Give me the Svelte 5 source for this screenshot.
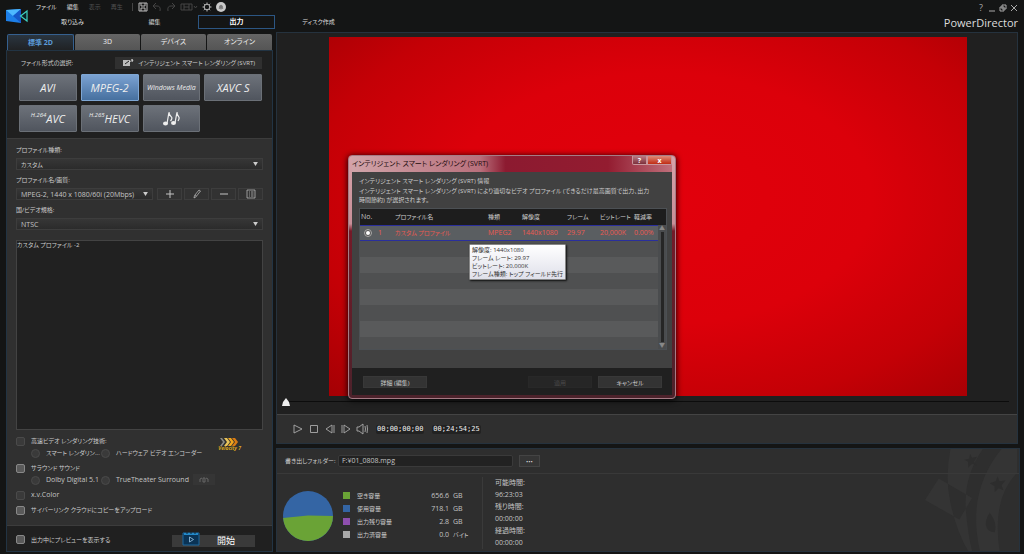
<script>
  const menus = [
    { label: 'ファイル' },
    { label: '編集' },
    { label: '表示', off: true },
    { label: '再生', off: true }
  ];
  const rooms = ['取り込み', '編集', '出力', 'ディスク作成'];
  const tabs = ['標準 2D', '3D', 'デバイス', 'オンライン'];
  const formats = [
    { text: 'AVI' },
    { text: 'MPEG-2' },
    { text: 'Windows Media', small: true },
    { text: 'XAVC S' },
    { sup: 'H.264', text: 'AVC' },
    { sup: 'H.265', text: 'HEVC' },
    { icon: true, text: '' }
  ];
  const space = [
    { label: '空き容量', value: '656.6', unit: 'GB', kind: 'free' },
    { label: '使用容量', value: '718.1', unit: 'GB', kind: 'used' },
    { label: '出力残り容量', value: '2.8', unit: 'GB', kind: 'left' },
    { label: '出力済容量', value: '0.0', unit: 'バイト', kind: 'done' }
  ];
  const times = [
    { label: '可能時間:', value: '96:23:03' },
    { label: '残り時間:', value: '00:00:00' },
    { label: '経過時間:', value: '00:00:00' }
  ];
  const emptyRows = [1, 2, 3, 4, 5, 6, 7];

  let room = $state('出力');
  let tab = $state('標準 2D');
  let format = $state('MPEG-2');
  let notes = $state('カスタム プロファイル -2');
  let folder = $state('F:¥01_0808.mpg');
</script>

{#snippet arrow()}
  <svg class="arrow" viewBox="0 0 6 5" aria-hidden="true"><path d="M0 0h6L3 5z" /></svg>
{/snippet}

<div class="app">
  <header>
    <svg class="logo" viewBox="0 0 24 16" aria-hidden="true">
      <path d="M0 2 15 1v14L0 13z" fill="#1d7fe8" />
      <path d="M0 2 15 1 7 8z" fill="#4db8ff" />
      <path d="M15 15 7 8l8-7z" fill="#1557c8" />
      <path d="M21 3 14.500 8l6.500 5z" fill="#0a2026" stroke="#3fd2c2" stroke-width="1.200" />
    </svg>
    <div class="bars">
      <div class="menu">
        {#each menus as item}
          <button disabled={item.off}>{item.label}</button>
        {/each}
        <span class="split"></span>
        <div class="tools">
          <svg viewBox="0 0 10 10"><path d="M1 1h8v8H1zM3 1v3h4V1M3 9V6h4v3" /></svg>
          <svg class="dim" viewBox="0 0 10 10"><path d="M4 1 1 4l3 3M1 4h4q4 0 3 5" /></svg>
          <svg class="dim" viewBox="0 0 10 10"><path d="M6 1l3 3-3 3M9 4H5Q1 4 2 9" /></svg>
          <svg class="wide dim" viewBox="0 0 18 10"><path d="M1 2h11v6H1zM4 2v6M9 2v6M4 5h5M14 4l1.500 2L17 4" /></svg>
          <svg viewBox="0 0 10 10">
            <circle cx="5" cy="5" r="2.800" />
            <path d="M5 .5v1.500M5 8v1.500M.5 5H2M8 5h1.500M1.800 1.800l1 1M7.200 7.200l1 1M1.800 8.200l1-1M7.200 2.800l1-1" />
          </svg>
          <svg viewBox="0 0 10 10">
            <circle cx="5" cy="5" r="5" fill="#c9c9c9" stroke="none" />
            <path d="M3 6.500h4L6.500 5V4q-1.500-2-3 0v1zM5 7v1" fill="#777" stroke="#777" stroke-width=".6" />
          </svg>
        </div>
      </div>
      <nav>
        {#each rooms as item}
          <button class:active={item === room} onclick={() => (room = item)}>{item}</button>
        {/each}
      </nav>
    </div>
    <div class="brand">
      <div class="window">
        <button>?</button>
        <button aria-label="最小化"><svg viewBox="0 0 8 8"><path d="M1 7h6" /></svg></button>
        <button aria-label="元に戻す"><svg viewBox="0 0 8 8"><path d="M3 1h4v4H3zM1 3h4v4H1z" /></svg></button>
        <button aria-label="閉じる"><svg viewBox="0 0 8 8"><path d="M1 1l6 6M7 1 1 7" /></svg></button>
      </div>
      <div class="name">PowerDirector</div>
    </div>
  </header>

  <main>
    <aside>
      <div class="tabs">
        {#each tabs as item}
          <button class:active={item === tab} onclick={() => (tab = item)}>{item}</button>
        {/each}
      </div>
      <div class="panel">
        <section class="formats">
          <div class="formats-head">
            <span>ファイル形式の選択:</span>
            <button class="svrt">
              <svg viewBox="0 0 12 8" aria-hidden="true">
                <path d="M1 1h7v6H1z" fill="#bbb" />
                <path d="M3 5l4-3" stroke="#222" />
                <path d="M7 3l4-2M9 0l2 1-1 2" stroke="#ddd" stroke-width=".8" />
              </svg>
              インテリジェント スマート レンダリング (SVRT)
            </button>
          </div>
          <div class="format-grid">
            {#each formats as item}
              <button
                class:active={item.text === format}
                class:small={item.small}
                aria-label={item.icon ? '音声' : undefined}
                onclick={() => (format = item.text)}
              >
                {#if item.sup}<sup>{item.sup}</sup>{/if}{item.text}
                {#if item.icon}
                  <svg viewBox="0 0 18 16" aria-hidden="true">
                    <ellipse cx="3.500" cy="12.500" rx="2.500" ry="2" />
                    <ellipse cx="11.500" cy="12" rx="2.500" ry="2" />
                    <path d="M5 12.500 7 1q0 3 2 4.500T8.500 10M13 12l2-11q0 3 1.500 4.500T16 10" fill="none" stroke="#eee" stroke-width="1.200" />
                  </svg>
                {/if}
              </button>
            {/each}
          </div>
        </section>

        <section class="profile">
          <label for="kind">プロファイル種類:</label>
          <div class="pick">
            <select id="kind"><option>カスタム</option></select>
            {@render arrow()}
          </div>
          <label for="quality">プロファイル名/画質:</label>
          <div class="quality">
            <div class="pick">
              <select id="quality" class="large"><option>MPEG-2, 1440 x 1080/60i (20Mbps)</option></select>
              {@render arrow()}
            </div>
            <button aria-label="追加"><svg viewBox="0 0 10 10"><path d="M1 5h8M5 1v8" /></svg></button>
            <button aria-label="変更"><svg viewBox="0 0 10 10"><path class="thin" d="M2 9l.5-2.500L7 1l1.500 1L4 7.800zM3 6l1.500 1" /></svg></button>
            <button aria-label="削除"><svg viewBox="0 0 10 10"><path d="M1 5h8" /></svg></button>
            <button aria-label="詳細"><svg viewBox="0 0 10 10"><path class="thin" d="M1 1h8v8H1zM3 3h1M3 5h1M3 7h1M5 3h2.500M5 5h2.500M5 7h2.500" /></svg></button>
          </div>
          <label for="standard">国/ビデオ規格:</label>
          <div class="pick">
            <select id="standard" class="large"><option>NTSC</option></select>
            {@render arrow()}
          </div>
          <textarea bind:value={notes} aria-label="プロファイルの説明" spellcheck="false"></textarea>

          <div class="options">
            <label><input type="checkbox" disabled />高速ビデオ レンダリング技術:</label>
            <div class="sub">
              <label><input type="radio" name="speed" disabled />スマート レンダリン...</label>
              <label><input type="radio" name="speed" disabled />ハードウェア ビデオ エンコーダー</label>
            </div>
            <label><input type="checkbox" />サラウンド サウンド</label>
            <div class="sub large">
              <label><input type="radio" name="sound" disabled />Dolby Digital 5.1</label>
              <label><input type="radio" name="sound" disabled />TrueTheater Surround</label>
              <button class="ears" disabled aria-label="サラウンド設定">
                <svg viewBox="0 0 12 8"><path d="M2 6q-1-4 2-4M10 6q1-4-2-4M5 2h2v4H5z" /></svg>
              </button>
            </div>
            <label class="large"><input type="checkbox" disabled />x.v.Color</label>
            <label><input type="checkbox" />サイバーリンク クラウドにコピーをアップロード</label>
            <div class="velocity">
              <svg viewBox="0 0 22 8" aria-hidden="true">
                <path d="M2 0h2l3 4-3 4H2l3-4z" fill="#8b8b86" />
                <path d="M6 0h3l3 4-3 4H6l3-4z" fill="#e8c45a" />
                <path d="M10 0h3l3 4-3 4h-3l3-4z" fill="#f0a51e" />
                <path d="M14 0h3l3 4-3 4h-3l3-4z" fill="#d97b12" />
              </svg>
              <span>Velocity 7</span>
            </div>
          </div>
        </section>

        <footer>
          <label><input type="checkbox" />出力中にプレビューを表示する</label>
          <button class="start">
            <svg viewBox="0 0 18 14" aria-hidden="true">
              <path d="M1 1h16v12H1z" fill="#0a3355" stroke="#1b69a0" />
              <path d="M2 1h14v2H2z" fill="#2389c9" />
              <path d="M5 0v2M9 0v2M13 0v2" stroke="#10283a" />
              <path d="M7.500 5v5l4-2.500z" fill="none" stroke="#9cc7e6" stroke-width=".8" />
            </svg>
            開始
          </button>
        </footer>
      </div>
    </aside>

    <div class="work">
      <section class="preview">
        <div class="screen"></div>
        <div class="seek">
          <svg viewBox="0 0 8 8" aria-hidden="true"><path d="M4 0 7 4l1 4H0l1-4z" /></svg>
        </div>
        <div class="player">
          <button aria-label="再生"><svg viewBox="0 0 12 12"><path d="M2 2v8l8-4z" /></svg></button>
          <button aria-label="停止"><svg viewBox="0 0 12 12"><path d="M2.500 2.500h7v7h-7z" /></svg></button>
          <button aria-label="前のフレーム"><svg viewBox="0 0 12 12"><path d="M8 2v8L2 6zM10 2v8" /></svg></button>
          <button aria-label="次のフレーム"><svg viewBox="0 0 12 12"><path d="M4 2v8l6-4zM2 2v8" /></svg></button>
          <button aria-label="音量"><svg viewBox="0 0 12 12"><path d="M1 4h2l4-3v10L3 8H1zM9 3q1 3 0 6M11 2q1 4 0 8" /></svg></button>
          <output>00;00;00;00</output>
          <output>00;24;54;25</output>
        </div>
      </section>

      <section class="info">
        <svg class="mark" viewBox="0 0 94 104" aria-hidden="true">
          <path
            fill-rule="evenodd"
            d="M26 0h33Q38 30 42 66q2 22 6 38H44Q32 84 26 55 20 30 26 0zM94 0v24Q68 50 76 104H56Q42 44 78 0zM14 30 48 50 35 72 0 52z"
          />
          <path class="cut" d="M46 5l2 4 5-1-3 5 3 4-5-2-4 4v-6l-4-2 5-1zM74 28l2 5 6-1-4 5 2 5-5-2-4 4v-6l-5-3 6-2zM66 65q8 10 5 20-8 0-9-8 0-6 4-12z" />
        </svg>
        <div class="folder">
          <label for="folder">書き出しフォルダー:</label>
          <input id="folder" class="large" type="text" bind:value={folder} />
          <button aria-label="参照">•••</button>
        </div>
        <div class="stats">
          <svg class="pie" viewBox="0 0 50 50" role="img" aria-label="ディスク容量">
            <circle cx="25" cy="25" r="25" fill="#3465a4" />
            <path d="M50 25A25 25 0 0 1 .08 27L25 24.500z" fill="#6aa336" />
          </svg>
          <table class="space">
            <tbody>
              {#each space as row}
                <tr>
                  <th scope="row"><i class={row.kind}></i>{row.label}</th>
                  <td class="value large">{row.value}</td>
                  <td class:large={row.unit === 'GB'}>{row.unit}</td>
                </tr>
              {/each}
            </tbody>
          </table>
          <dl class="large">
            {#each times as row}
              <dt>{row.label}</dt>
              <dd>{row.value}</dd>
            {/each}
          </dl>
        </div>
      </section>
    </div>
  </main>

  <div class="overlay">
    <div class="dialog" role="dialog" aria-labelledby="dialog-title">
      <div class="title">
        <h2 id="dialog-title">インテリジェント スマート レンダリング (SVRT)</h2>
        <div class="caption">
          <button>?</button>
          <button class="close" aria-label="閉じる">x</button>
        </div>
      </div>
      <div class="body">
        <h3>インテリジェント スマート レンダリング (SVRT) 情報</h3>
        <p>インテリジェント スマート レンダリング (SVRT) により適切なビデオ プロファイル (できるだけ最高画質で出力、出力時間節約) が選択されます。</p>
        <div class="list">
          <div class="rows">
            <table>
              <colgroup>
                <col class="c-no" /><col /><col class="c-kind" /><col class="c-size" />
                <col class="c-frame" /><col class="c-rate" /><col class="c-cut" />
              </colgroup>
              <thead>
                <tr>
                  <th class="large">No.</th><th>プロファイル名</th><th>種類</th><th>解像度</th>
                  <th>フレーム</th><th>ビットレート</th><th>軽減率</th>
                </tr>
              </thead>
              <tbody>
                <tr class="selected">
                  <td class="large"><input type="radio" name="profile" checked aria-label="カスタム プロファイル" />1</td>
                  <td>カスタム プロファイル</td><td class="large">MPEG2</td><td class="large">1440x1080</td>
                  <td class="large">29.97</td><td class="large">20,000K</td><td class="large">0.00%</td>
                </tr>
                {#each emptyRows as row (row)}
                  <tr class="empty"><td colspan="7"></td></tr>
                {/each}
              </tbody>
            </table>
          </div>
          <div class="scroll"><span>▲</span><i></i><span>▼</span></div>
          <div class="tip">
            解像度: 1440x1080<br />フレーム レート: 29.97<br />ビットレート: 20,000K<br />フレーム種類: トップ フィールド先行
          </div>
        </div>
      </div>
      <div class="actions">
        <button>詳細 (編集)</button>
        <span></span>
        <button disabled>適用</button>
        <button>キャンセル</button>
      </div>
    </div>
  </div>
</div>

<style>
  :global(body) {
    background: #141414;
  }

  .app {
    position: relative;
    display: flex;
    flex-direction: column;
    min-height: 100vh;
    box-sizing: border-box;
    background: #141515;
    color: #cdcdcd;
    font: 6px/12px "Open Sans", "Noto Sans CJK JP", sans-serif;
    font-feature-settings: "palt";
  }

  .app :global(*) {
    box-sizing: border-box;
  }

  button,
  input,
  select,
  textarea {
    font: inherit;
    font-feature-settings: inherit;
    color: inherit;
    margin: 0;
    padding: 0;
    border: 0;
    background: none;
  }

  svg {
    display: block;
    flex: none;
    fill: none;
  }

  .large {
    color: #c4c4c4;
    font-size: 7px;
  }

  /* header */
  header {
    display: flex;
    height: 32px;
    padding: 0 6px;
  }

  .logo {
    width: 24px;
    height: 16px;
    margin: 8px 4px 0 0;
  }

  .bars {
    flex: 1;
  }

  .menu {
    display: flex;
    align-items: center;
    gap: 10px;
    height: 13px;
    padding-left: 2px;
  }

  .menu button {
    color: #ddd;
  }

  .menu button:disabled {
    color: #505050;
  }

  .split {
    width: 1px;
    height: 8px;
    margin: 0 -5px 0 -1px;
    background: #444;
  }

  .tools {
    display: flex;
    gap: 4px;
  }

  .tools svg {
    width: 10px;
    height: 10px;
    stroke: #bbb;
  }

  .tools .wide {
    width: 18px;
  }

  .tools .dim {
    stroke: #444;
  }

  nav {
    display: flex;
    gap: 5px;
    margin-top: 2px;
  }

  nav button {
    width: 77px;
    height: 14px;
    border: 1px solid transparent;
    color: #ddd;
  }

  nav .active {
    border-color: #2c5683;
    color: #fff;
    font-size: 7px;
    font-weight: 700;
  }

  .brand {
    text-align: right;
  }

  .window {
    display: flex;
    justify-content: flex-end;
    align-items: center;
    gap: 3px;
    height: 15px;
    color: #aaa;
  }

  .window button {
    width: 8px;
    font-size: 9px;
  }

  .window svg {
    width: 8px;
    height: 8px;
    stroke: #aaa;
  }

  .name {
    color: #ddd;
    font-size: 11px;
    line-height: 16px;
  }

  main {
    flex: 1;
    display: flex;
    gap: 3px;
    padding: 0 4px 2px 6px;
  }

  /* output settings */
  aside {
    display: flex;
    flex-direction: column;
    width: 267px;
  }

  .tabs {
    display: flex;
    gap: 1px;
    padding: 2px 1px 0;
  }

  .tabs button {
    flex: 1;
    height: 16px;
    border-radius: 2px 2px 0 0;
    background: linear-gradient(#656565, #555);
    color: #eee;
    font-size: 7px;
  }

  .tabs .active {
    border: 1px solid #35608f;
    border-bottom: 0;
    background: linear-gradient(#2a3540, #202224);
    color: #5c9bd8;
    font-weight: 700;
  }

  .panel {
    flex: 1;
    display: flex;
    flex-direction: column;
    border: 1px solid #223444;
    background: #303030;
  }

  .formats {
    padding: 6px 10px 6px 12px;
    border-bottom: 1px solid #3c3c3c;
    background: #202020;
  }

  .formats-head {
    display: flex;
    align-items: center;
    justify-content: space-between;
    padding-left: 2px;
    margin-bottom: 5px;
  }

  .svrt {
    display: flex;
    align-items: center;
    gap: 4px;
    height: 12px;
    padding: 0 7px;
    background: #303030;
  }

  .svrt svg {
    width: 12px;
    height: 8px;
  }

  .format-grid {
    display: grid;
    grid-template-columns: repeat(4, 1fr);
    gap: 4px;
  }

  .format-grid button {
    display: flex;
    align-items: center;
    justify-content: center;
    height: 27px;
    border: 1px solid #6b7077;
    border-radius: 1px;
    background: linear-gradient(#6d727a, #50555e);
    color: #eee;
    font-size: 11px;
    font-style: italic;
    white-space: nowrap;
  }

  .format-grid .small {
    font-size: 7px;
  }

  .format-grid .active {
    border-color: #7ea6d3;
    background: linear-gradient(#7ba2d2, #46709f);
  }

  .format-grid sup {
    font-size: 6px;
    line-height: 6px;
    align-self: flex-start;
    margin-top: 6px;
  }

  .format-grid svg {
    width: 18px;
    height: 16px;
    fill: #eee;
  }

  .profile {
    flex: 1;
    display: flex;
    flex-direction: column;
    padding: 5px 9px 6px;
  }

  .profile > label {
    line-height: 13px;
    margin-bottom: 1px;
  }

  .pick {
    position: relative;
    margin-bottom: 4px;
  }

  .pick select {
    display: block;
    width: 100%;
    height: 12px;
    padding: 0 4px;
    border: 1px solid #3d3d3d;
    background: linear-gradient(#363636, #2b2b2b);
    appearance: none;
  }

  .arrow {
    position: absolute;
    top: 4px;
    right: 5px;
    width: 5px;
    height: 4px;
    fill: #ccc;
    pointer-events: none;
  }

  .quality {
    display: flex;
    gap: 2px;
  }

  .quality .pick {
    flex: 1;
    margin-right: 2px;
  }

  .quality button {
    display: grid;
    place-items: center;
    width: 25px;
    height: 12px;
    border: 1px solid #3d3d3d;
    background: #323232;
  }

  .quality button svg {
    width: 10px;
    height: 10px;
    stroke: #c4c4c4;
  }

  .thin {
    stroke-width: 0.7;
  }

  textarea {
    flex: 1;
    display: block;
    margin: 6px 0 5px;
    border: 1px solid #434343;
    background: #212121;
    line-height: 9px;
    resize: none;
  }

  .options {
    position: relative;
  }

  .options label,
  footer label {
    display: flex;
    align-items: center;
    gap: 6px;
    white-space: nowrap;
  }

  .options > label ~ label {
    margin-bottom: 3px;
  }

  .options > label:nth-of-type(2) {
    margin-bottom: 0;
  }

  .sub {
    display: flex;
    gap: 4px;
    height: 12px;
    margin-bottom: 3px;
    padding-left: 15px;
  }

  .sub label:first-child {
    width: 66px;
  }

  input[type="checkbox"],
  input[type="radio"] {
    flex: none;
    width: 9px;
    height: 9px;
    border: 1px solid #888;
    border-radius: 2px;
    background: #5a5a5a;
    appearance: none;
  }

  input[type="radio"] {
    border-radius: 50%;
  }

  input[type="checkbox"]:disabled,
  input[type="radio"]:disabled {
    border-color: #4a4a4a;
    background: #3a3a3a;
  }

  .ears {
    width: 22px;
    height: 11px;
    padding-left: 5px;
    background: #353535;
  }

  .ears svg {
    width: 12px;
    height: 8px;
    stroke: #666;
  }

  .velocity {
    position: absolute;
    top: 3px;
    right: 22px;
    color: #d9a520;
    font-size: 5px;
    line-height: 5px;
    font-weight: 700;
    font-style: italic;
  }

  .velocity svg {
    width: 22px;
    height: 8px;
  }

  footer {
    display: flex;
    align-items: center;
    justify-content: space-between;
    height: 26px;
    padding: 2px 17px 0 9px;
    border-top: 1px solid #3c3c3c;
    background: #202020;
  }

  .start {
    display: flex;
    align-items: center;
    gap: 17px;
    width: 83px;
    height: 12px;
    margin-top: 3px;
    padding-left: 10px;
    background: #3a3a3a;
    color: #fff;
    font-size: 9px;
  }

  .start svg {
    width: 18px;
    height: 14px;
    margin-bottom: 5px;
  }

  /* preview */
  .work {
    flex: 1;
    display: flex;
    flex-direction: column;
    gap: 4px;
  }

  .preview {
    flex: 1;
    display: flex;
    flex-direction: column;
    margin-right: 2px;
    border: 1px solid #25323e;
    background: #202020;
  }

  .screen {
    aspect-ratio: 16 / 9;
    margin: 4px 50px 0 52px;
    background: radial-gradient(ellipse at 52% 45%, #e2000c 0%, #dc000a 45%, #c40006 75%, #a40004 100%);
  }

  .seek {
    flex: 1;
    margin: 5px 8px 0 9px;
    border-top: 1px solid #0c0c0c;
  }

  .seek svg {
    width: 8px;
    height: 8px;
    margin: -4px 0 0 -4px;
    fill: #eee;
  }

  .player {
    display: flex;
    align-items: center;
    gap: 4px;
    height: 29px;
    padding-left: 15px;
    border-top: 1px solid #444;
    background: #2f2f2f;
  }

  .player svg {
    width: 12px;
    height: 12px;
    stroke: #aaa;
    stroke-width: 0.9;
  }

  .player output {
    margin-left: 4px;
    padding: 0 1px;
    border-radius: 2px;
    background: #222;
    color: #f0f0f0;
    font-family: "DejaVu Sans Mono", monospace;
    font-size: 7px;
    line-height: 9px;
  }

  /* disk space and timing */
  .info {
    position: relative;
    height: 104px;
    border: 1px solid #25323e;
    background: #2e2e2e;
  }

  .mark {
    position: absolute;
    top: 0;
    right: 2px;
    height: 100%;
    fill: #343434;
  }

  .cut {
    fill: #2d2d2d;
  }

  .folder {
    position: relative;
    display: flex;
    align-items: center;
    height: 25px;
    padding-left: 8px;
    border-bottom: 1px solid #393939;
  }

  .folder label {
    width: 53px;
    white-space: nowrap;
  }

  .folder input {
    width: 175px;
    height: 12px;
    margin-right: 6px;
    padding: 0 3px;
    border: 1px solid #3a3a3a;
    border-radius: 2px;
    background: #222;
  }

  .folder button {
    width: 21px;
    height: 12px;
    border: 1px solid #444;
    background: #353535;
    color: #ddd;
  }

  .stats {
    position: relative;
    display: flex;
    align-items: center;
    padding: 3px 0 0 6px;
  }

  .pie {
    width: 50px;
    height: 50px;
    margin-top: 6px;
  }

  .space {
    width: 122px;
    margin: 4px 17px 0 10px;
    border-collapse: collapse;
    table-layout: fixed;
  }

  .space th,
  .space td {
    height: 13px;
    padding: 0;
    font-weight: 400;
    text-align: left;
    white-space: nowrap;
  }

  .space th {
    width: 76px;
  }

  .space .value {
    padding-right: 4px;
    text-align: right;
  }

  .space td:last-child {
    width: 12px;
  }

  .space i {
    display: inline-block;
    width: 7px;
    height: 7px;
    margin-right: 7px;
    vertical-align: middle;
  }

  .free {
    background: #6aa336;
  }

  .used {
    background: #3465a4;
  }

  .left {
    background: #8e4fae;
  }

  .done {
    background: #a8a8a8;
  }

  dl {
    margin: 0;
    padding-left: 12px;
    border-left: 1px solid #3a3a3a;
  }

  dd {
    margin: 0;
  }

  /* dialog */
  .overlay {
    position: absolute;
    inset: 0;
    display: grid;
    place-items: center;
  }

  .dialog {
    width: 328px;
    padding: 0 3px 3px;
    border: 1px solid #a57c86;
    border-radius: 4px;
    background: linear-gradient(#d7a3aa 0, #c88f98 28%, #741a28 31%, #4c222b 100%);
    box-shadow: 0 1px 6px #000;
  }

  .title {
    display: flex;
    justify-content: space-between;
    height: 16px;
    background: linear-gradient(90deg, #d0a4a9, #b9707c 40%, #8c1a30 48%, #931c30 80%, #c0707c);
  }

  h2,
  h3,
  p {
    margin: 0;
    font-weight: 400;
  }

  h2 {
    color: #1c0a0c;
    font-size: 7px;
    line-height: 15px;
  }

  .caption {
    display: flex;
    height: 9px;
  }

  .caption button {
    width: 15px;
    border: 1px solid #c9959c;
    border-top: 0;
    border-radius: 0 0 0 2px;
    background: linear-gradient(#bd7b84, #7b2f3b);
    color: #fff;
    font-size: 7px;
    font-weight: 700;
    line-height: 7px;
  }

  .caption .close {
    width: 25px;
    border-radius: 0 0 2px;
    background: linear-gradient(#e08a78, #c02c14);
  }

  .body {
    padding: 4px 5px 18px 7px;
    background: #414141;
  }

  h3 {
    font-size: 6px;
    line-height: 10px;
  }

  p {
    margin-bottom: 3px;
    padding: 1px 14px 0 0;
    line-height: 9px;
  }

  .list {
    position: relative;
    height: 142px;
    border: 1px solid #4c5054;
    background: #1d1d1d;
  }

  .rows {
    height: 100%;
    margin-right: 7px;
    overflow: hidden;
  }

  .rows table {
    width: 100%;
    border-collapse: separate;
    border-spacing: 0;
    table-layout: fixed;
  }

  .rows th,
  .rows td {
    height: 16px;
    padding: 0 1px;
    font-weight: 400;
    text-align: left;
    white-space: nowrap;
  }

  .c-no { width: 34px; }
  .c-kind { width: 34px; }
  .c-size { width: 45px; }
  .c-frame { width: 33px; }
  .c-rate { width: 34px; }
  .c-cut { width: 26px; }

  .rows .empty:nth-child(odd) td {
    background: #595a5b;
  }

  .rows .empty:nth-child(even) td {
    background: #4f5051;
  }

  .rows .selected td {
    border-top: 1px solid #2a2f9c;
    border-bottom: 1px solid #2a2f9c;
    background: #5a5e61;
    color: #ea5a52;
  }

  .selected input[type="radio"] {
    width: 8px;
    height: 8px;
    margin: 0 6px 0 3px;
    border: 2px solid #555;
    outline: 1px solid #aaa;
    outline-offset: -1px;
    background: #fff;
    vertical-align: middle;
  }

  .scroll {
    position: absolute;
    top: 16px;
    right: 0;
    bottom: 0;
    width: 8px;
    display: flex;
    flex-direction: column;
    align-items: center;
    background: #4a4c4e;
    color: #888;
    line-height: 7px;
  }

  .scroll i {
    flex: 1;
    width: 3px;
    background: #262626;
  }

  .tip {
    position: absolute;
    top: 35px;
    left: 109px;
    padding: 1px 2px;
    border: 1px solid #888;
    border-radius: 1px;
    background: linear-gradient(#fff, #dfe0ea);
    box-shadow: 1px 1px 2px #111;
    color: #333;
    line-height: 8px;
    white-space: nowrap;
  }

  .actions {
    display: flex;
    gap: 6px;
    height: 27px;
    padding: 8px 10px 0 11px;
    background: #202020;
  }

  .actions span {
    flex: 1;
  }

  .actions button {
    width: 64px;
    height: 12px;
    border: 1px solid #383838;
    background: #333;
    color: #ccc;
  }

  .actions button:disabled {
    border-color: #282828;
    background: #262626;
    color: #4a4a4a;
  }
</style>
